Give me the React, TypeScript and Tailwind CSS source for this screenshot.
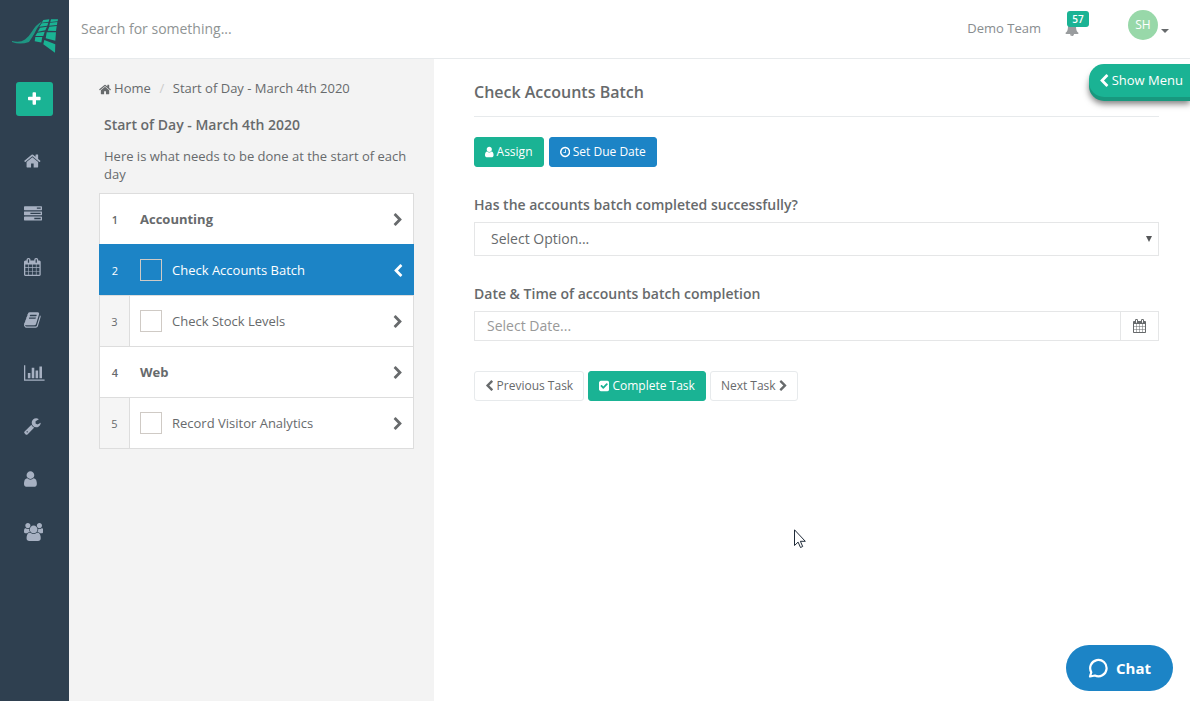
import { useState } from "react";
import clsx from "clsx";

type Glyph = { box: string; d: string };

const ICONS = {
  home: {
    box: "64 0 1664 1792",
    d: "M1472 992v480q0 26-19 45t-45 19h-384v-384h-256v384h-384q-26 0-45-19t-19-45v-480q0-1 .5-3t.5-3l575-474 575 474q1 2 1 6zm223-69l-62 74q-8 9-21 11h-3q-13 0-21-7l-692-577-692 577q-12 8-24 7-13-2-21-11l-62-74q-8-10-7-23.5t11-21.5l719-599q32-26 76-26t76 26l244 204v-195q0-14 9-23t23-9h192q14 0 23 9t9 23v408l219 182q10 8 11 21.5t-7 23.5z",
  },
  tasks: {
    box: "0 0 1792 1792",
    d: "M1024 1408h640v-128h-640v128zm-384-512h1024v-128h-1024v128zm640-512h384v-128h-384v128zm512 832v256q0 26-19 45t-45 19h-1664q-26 0-45-19t-19-45v-256q0-26 19-45t45-19h1664q26 0 45 19t19 45zm0-512v256q0 26-19 45t-45 19h-1664q-26 0-45-19t-19-45v-256q0-26 19-45t45-19h1664q26 0 45 19t19 45zm0-512v256q0 26-19 45t-45 19h-1664q-26 0-45-19t-19-45v-256q0-26 19-45t45-19h1664q26 0 45 19t19 45z",
  },
  calendar: {
    box: "64 0 1664 1792",
    d: "M192 1664h288v-288h-288v288zm352 0h320v-288h-320v288zm-352-352h288v-320h-288v320zm352 0h320v-320h-320v320zm-352-384h288v-288h-288v288zm736 736h320v-288h-320v288zm-384-736h320v-288h-320v288zm768 736h288v-288h-288v288zm-384-352h320v-320h-320v320zm-352-864v-288q0-13-9.500-22.500t-22.500-9.500h-64q-13 0-22.500 9.500t-9.500 22.500v288q0 13 9.500 22.500t22.500 9.500h64q13 0 22.500-9.500t9.500-22.500zm736 864h288v-320h-288v320zm-384-384h320v-288h-320v288zm384 0h288v-288h-288v288zm32-480v-288q0-13-9.500-22.500t-22.500-9.500h-64q-13 0-22.500 9.500t-9.500 22.500v288q0 13 9.500 22.500t22.500 9.500h64q13 0 22.500-9.500t9.500-22.500zm384-64v1280q0 52-38 90t-90 38h-1408q-52 0-90-38t-38-90v-1280q0-52 38-90t90-38h128v-96q0-66 47-113t113-47h64q66 0 113 47t47 113v96h384v-96q0-66 47-113t113-47h64q66 0 113 47t47 113v96h128q52 0 90 38t38 90z",
  },
  book: {
    box: "64 0 1664 1792",
    d: "M1703 478q40 57 18 129l-275 906q-19 64-76.500 107.500t-122.500 43.500h-923q-77 0-148.500-53.500t-99.500-131.500q-24-67-2-127 0-4 3-27t4-37q1-8-3-21.500t-3-19.500q2-11 8-21t16.500-23.500 16.500-23.500q23-38 45-91.500t30-91.500q3-10 .5-30t-.5-28q3-11 17-28t17-23q21-36 42-92t25-90q1-9-2.500-32t.5-28q4-13 22-30.500t22-22.500q19-26 42.500-84.500t27.500-96.500q1-8-3-25.500t-2-26.500q2-8 9-18t18-23 17-21q8-12 16.500-30.500t15-35 16-36 19.500-32 26.500-23.500 36-11.500 47.500 5.500l-1 3q38-9 51-9h761q74 0 114 56t18 130l-274 906q-36 119-71.500 153.500t-128.500 34.500h-869q-27 0-38 15-11 16-1 43 24 70 144 70h923q29 0 56-15.500t35-41.500l300-987q7-22 5-57 38 15 59 43zm-1064 2q-4 13 2 22.500t20 9.500h608q13 0 25.500-9.500t16.500-22.500l21-64q4-13-2-22.500t-20-9.500h-608q-13 0-25.500 9.500t-16.500 22.500zm-83 256q-4 13 2 22.500t20 9.500h608q13 0 25.500-9.500t16.500-22.500l21-64q4-13-2-22.500t-20-9.500h-608q-13 0-25.500 9.500t-16.500 22.500z",
  },
  chart: {
    box: "0 0 2048 1792",
    d: "M640 896v512h-256v-512h256zm384-512v1024h-256v-1024h256zm1024 1152v128h-2048v-1536h128v1408h1920zm-640-896v768h-256v-768h256zm384-384v1152h-256v-1152h256z",
  },
  wrench: {
    box: "64 0 1664 1792",
    d: "M448 1472q0-26-19-45t-45-19-45 19-19 45 19 45 45 19 45-19 19-45zm644-420l-682 682q-37 37-90 37-52 0-91-37l-106-108q-38-36-38-90 0-53 38-91l681-681q39 98 114.500 173.500t173.500 114.500zm634-435q0 39-23 106-47 134-164.500 217.500t-258.500 83.500q-185 0-316.500-131.500t-131.500-316.500 131.500-316.500 316.500-131.500q58 0 121.500 16.500t107.500 46.500q16 11 16 28t-16 28l-293 169v224l193 107q5-3 79-48.500t135.500-81 70.500-35.500q15 0 23.500 10t8.500 25z",
  },
  user: {
    box: "256 0 1280 1792",
    d: "M1536 1399q0 109-62.500 187t-150.500 78h-854q-88 0-150.500-78t-62.500-187q0-85 8.500-160.500t31.500-152 58.500-131 94-89 134.500-34.500q131 128 313 128t313-128q76 0 134.500 34.500t94 89 58.500 131 31.500 152 8.500 160.500zm-256-887q0 159-112.500 271.500t-271.500 112.500-271.500-112.500-112.500-271.500 112.500-271.500 271.500-112.500 271.500 112.500 112.500 271.500z",
  },
  users: {
    box: "-64 0 1920 1792",
    d: "M529 896q-162 5-265 128h-134q-82 0-138-40.500t-56-118.500q0-353 124-353 6 0 43.500 21t97.500 42.500 119 21.500q67 0 133-23-5 37-5 66 0 159 90 256zm1071 637q0 120-73 189.500t-194 69.500h-874q-121 0-194-69.500t-73-189.500q0-53 3.500-103.500t14-109 26.500-108.500 43-97.500 62-81 85.500-53.500 111.500-20q10 0 43 21.500t73 48 107 48 135 21.500 135-21.500 107-48 73-48 43-21.500q61 0 111.500 20t85.500 53.500 62 81 43 97.500 26.500 108.500 14 109 3.500 103.500zm-1024-1277q0 106-75 181t-181 75-181-75-75-181 75-181 181-75 181 75 75 181zm704 384q0 159-112.500 271.500t-271.500 112.500-271.500-112.500-112.500-271.500 112.500-271.500 271.500-112.500 271.500 112.500 112.500 271.500zm576 225q0 78-56 118.500t-138 40.500h-134q-103-123-265-128 90-97 90-256 0-29-5-66 66 23 133 23 59 0 119-21.500t97.500-42.500 43.500-21q124 0 124 353zm-128-609q0 106-75 181t-181 75-181-75-75-181 75-181 181-75 181 75 75 181z",
  },
  plus: {
    box: "192 0 1408 1792",
    d: "M1600 736v192q0 40-28 68t-68 28h-416v416q0 40-28 68t-68 28h-192q-40 0-68-28t-28-68v-416h-416q-40 0-68-28t-28-68v-192q0-40 28-68t68-28h416v-416q0-40 28-68t68-28h192q40 0 68 28t28 68v416h416q40 0 68 28t28 68z",
  },
  bell: {
    box: "0 0 1792 1792",
    d: "M912 1696q0-16-16-16-59 0-101.500-42.500t-42.500-101.500q0-16-16-16t-16 16q0 73 51.500 124.500t124.500 51.500q16 0 16-16zm816-288q0 52-38 90t-90 38h-448q0 106-75 181t-181 75-181-75-75-181h-448q-52 0-90-38t-38-90q50-42 91-88t85-119.500 74.500-158.500 50-206 19.500-260q0-152 117-282.500t307-158.500q-8-19-8-39 0-40 28-68t68-28 68 28 28 68q0 20-8 39 190 28 307 158.500t117 282.500q0 139 19.500 260t50 206 74.500 158.500 85 119.500 91 88z",
  },
  clock: {
    box: "128 0 1536 1792",
    d: "M1024 544v448q0 14-9 23t-23 9h-320q-14 0-23-9t-9-23v-64q0-14 9-23t23-9h224v-352q0-14 9-23t23-9h64q14 0 23 9t9 23zm416 352q0-148-73-273t-198-198-273-73-273 73-198 198-73 273 73 273 198 198 273 73 273-73 198-198 73-273zm224 0q0 209-103 385.500t-279.500 279.500-385.500 103-385.500-103-279.500-279.500-103-385.500 103-385.500 279.500-279.500 385.500-103 385.500 103 279.500 279.500 103 385.500z",
  },
  check: {
    box: "128 0 1536 1792",
    d: "M813 1299l614-614q19-19 19-45t-19-45l-102-102q-19-19-45-19t-45 19l-467 467-211-211q-19-19-45-19t-45 19l-102 102q-19 19-19 45t19 45l358 358q19 19 45 19t45-19zm851-883v960q0 119-84.500 203.500t-203.500 84.500h-960q-119 0-203.500-84.500t-84.500-203.500v-960q0-119 84.500-203.500t203.500-84.500h960q119 0 203.500 84.500t84.500 203.500z",
  },
  left: {
    box: "256 0 1280 1792",
    d: "M1427 301l-531 531 531 531q19 19 19 45t-19 45l-166 166q-19 19-45 19t-45-19l-742-742q-19-19-19-45t19-45l742-742q19-19 45-19t45 19l166 166q19 19 19 45t-19 45z",
  },
  right: {
    box: "256 0 1280 1792",
    d: "M1363 877l-742 742q-19 19-45 19t-45-19l-166-166q-19-19-19-45t19-45l531-531-531-531q-19-19-19-45t19-45l166-166q19-19 45-19t45 19l742 742q19 19 19 45t-19 45z",
  },
} satisfies Record<string, Glyph>;

type IconName = keyof typeof ICONS;

function Icon({ name, className }: { name: IconName; className: string }) {
  const { box, d } = ICONS[name];
  return (
    <svg viewBox={box} className={clsx("w-auto shrink-0", className)} fill="currentColor" aria-hidden="true">
      <path d={d} />
    </svg>
  );
}

function Logo() {
  return (
    <svg viewBox="0 0 48 36" className="h-9 w-12" fill="#1ab394" aria-hidden="true">
      {/* tail */}
      <path d="M0 23q8 2 13-1.500q4-3 7-8q4-7 10-10l-5 7q-3 6-5 9t-3 4.500q-9 3-17 0z" opacity=".75" />
      {/* inner column */}
      <path d="M31.300 2l6-.7-.6 2.400-7 1zM29.700 5.300l6.600-.6-1 3-8 1zM28 9.700l7-1-1.700 3.600-7.600 1.400zM25.300 14.700l7.400-1-1.400 4.300h-8zM23.300 19h7l-1 5.500-6.600-1.200z" />
      {/* outer column */}
      <path d="M39 1.300h7l-.3 2-7.400.7zM38 4.700l7.300-.7-.3 3-7.700.7zM37.300 8.700l7.400-.7-.7 5-8.300-.3zM34.700 14.300h9.300l-.7 8.400-9.600-2.400zM32.300 22l11 4.300-.3 8.400-11.700-8.400z" />
    </svg>
  );
}

const NAV: { icon: IconName; label: string }[] = [
  { icon: "home", label: "Home" },
  { icon: "tasks", label: "Tasks" },
  { icon: "calendar", label: "Calendar" },
  { icon: "book", label: "Library" },
  { icon: "chart", label: "Reports" },
  { icon: "wrench", label: "Settings" },
  { icon: "user", label: "Profile" },
  { icon: "users", label: "Teams" },
];

type Item = { id: number; title: string; heading?: boolean };

const ITEMS: Item[] = [
  { id: 1, title: "Accounting", heading: true },
  { id: 2, title: "Check Accounts Batch" },
  { id: 3, title: "Check Stock Levels" },
  { id: 4, title: "Web", heading: true },
  { id: 5, title: "Record Visitor Analytics" },
];

function Sidebar() {
  return (
    <aside className="flex w-[69px] shrink-0 flex-col bg-[#2f4050] text-[#a7b1c2]">
      <a href="#" aria-label="Dashboard" className="mt-[18px] ml-3">
        <Logo />
      </a>
      <button aria-label="Add" className="mt-7 ml-4 flex h-[34px] w-[37px] items-center justify-center rounded-[3px] bg-[#1ab394] text-white">
        <Icon name="plus" className="h-4" />
      </button>
      <nav className="mt-[18px] flex flex-col">
        {NAV.map((n) => (
          <a key={n.icon} href="#" aria-label={n.label} className="flex h-[53px] items-center pl-6">
            <Icon name={n.icon} className="h-[18px]" />
          </a>
        ))}
      </nav>
    </aside>
  );
}

function Header() {
  return (
    <header className="flex h-[59px] shrink-0 items-center border-b border-[#e7eaec] bg-white pr-[21px] pl-3">
      <input
        type="text"
        aria-label="Search"
        placeholder="Search for something..."
        className="min-w-0 flex-1 text-sm outline-none placeholder:text-[#8f9494]"
      />
      <span className="text-[13px] text-[#888d8f]">Demo Team</span>
      <button aria-label="Notifications" className="relative ml-6 text-[#999c9e]">
        <Icon name="bell" className="h-[14px]" />
        <span className="absolute bottom-[9px] left-[2px] flex h-4 w-[22px] items-center justify-center rounded-[3px] bg-[#1ab394] text-[10px] font-semibold text-white">
          57
        </span>
      </button>
      <button aria-label="Account" className="ml-[49px] flex items-center gap-[3px] pb-2">
        <span className="flex size-[30px] items-center justify-center rounded-full bg-[#98d8a9] text-xs text-white">SH</span>
        <span className="mt-3 border-x-4 border-t-4 border-x-transparent border-t-[#676a6c]" />
      </button>
    </header>
  );
}

function TaskRow({ item, active, onSelect }: { item: Item; active: boolean; onSelect: () => void }) {
  const id = "task-" + item.id;
  return (
    <li
      className={clsx(
        "flex h-[51px] border-x border-t",
        active ? "border-[#1c84c6] bg-[#1c84c6] font-medium text-white" : "border-[#dddddd] bg-white"
      )}
    >
      <span
        className={clsx(
          "flex w-[30px] shrink-0 items-center justify-center pt-[2px] text-[11px]",
          item.heading && "font-semibold",
          !item.heading && !active && "border-r border-[#dddddd] bg-[#f5f5f5]"
        )}
      >
        {item.id}
      </span>
      <div className="flex flex-1 items-center pl-[10px]">
        {item.heading ? (
          <span className="pt-[2px] font-bold">{item.title}</span>
        ) : (
          <>
            <input id={id} type="checkbox" className="size-[22px] appearance-none border border-[#cfcac5] checked:bg-[#1ab394]" />
            <label htmlFor={id} className="pt-[2px] pl-[10px]">{item.title}</label>
          </>
        )}
        <button aria-label={"Open " + item.title} onClick={onSelect} className="mr-[10px] ml-auto pt-[2px]">
          <Icon name={active ? "left" : "right"} className="h-[14px]" />
        </button>
      </div>
    </li>
  );
}

function TaskPanel({ active, onSelect }: { active: number; onSelect: (id: number) => void }) {
  return (
    <section className="w-[365px] shrink-0 bg-[#f3f3f3] pt-5 pr-5 pl-[30px]">
      <nav aria-label="Breadcrumb" className="flex h-5 items-center">
        <a href="#" className="flex items-center gap-[3px]">
          <Icon name="home" className="h-[13px]" />
          Home
        </a>
        <span className="w-[22px] text-center text-[#cccccc]">/</span>
        <span>Start of Day - March 4th 2020</span>
      </nav>
      <h2 className="mt-4 pl-[5px] text-sm leading-5 font-semibold">Start of Day - March 4th 2020</h2>
      <p className="mt-3 mb-[10px] pl-[5px] leading-[18px]">Here is what needs to be done at the start of each day</p>
      <ul className="border-b border-[#dddddd]">
        {ITEMS.map((item) => (
          <TaskRow key={item.id} item={item} active={item.id === active} onSelect={() => onSelect(item.id)} />
        ))}
      </ul>
    </section>
  );
}

const btn = "flex h-[30px] items-center gap-[3px] rounded-[3px] border px-[10px] text-xs";

function TaskForm() {
  return (
    <main className="min-w-0 flex-1 bg-white pt-5 pr-[31px] pl-10">
      <h1 className="border-b border-[#e7eaec] pt-[2px] pb-[13px] text-base leading-[22px] font-semibold">
        Check Accounts Batch
      </h1>
      <div className="mt-5 flex gap-[5px] text-white">
        <button className={clsx(btn, "border-[#1ab394] bg-[#1ab394]")}>
          <Icon name="user" className="h-3" />
          Assign
        </button>
        <button className={clsx(btn, "border-[#1c84c6] bg-[#1c84c6]")}>
          <Icon name="clock" className="h-3" />
          Set Due Date
        </button>
      </div>

      <label htmlFor="result" className="mt-7 block text-sm leading-5 font-semibold">
        Has the accounts batch completed successfully?
      </label>
      <div className="relative mt-[7px]">
        <select id="result" className="h-[34px] w-full appearance-none border border-[#e5e6e7] bg-white pl-4 text-sm outline-none">
          <option>Select Option...</option>
          <option>Yes</option>
          <option>No</option>
        </select>
        <span className="pointer-events-none absolute top-[14px] right-[7px] border-x-[3px] border-t-[6px] border-x-transparent border-t-[#555759]" />
      </div>

      <label htmlFor="completed" className="mt-7 block text-sm leading-5 font-semibold">
        Date &amp; Time of accounts batch completion
      </label>
      <div className="mt-[7px] flex h-[30px] border border-[#e5e6e7]">
        <input
          id="completed"
          type="text"
          placeholder="Select Date..."
          className="min-w-0 flex-1 pl-3 text-sm outline-none placeholder:text-[#999999]"
        />
        <button aria-label="Pick date" className="flex w-[38px] items-center justify-center border-l border-[#e5e6e7]">
          <Icon name="calendar" className="h-[14px]" />
        </button>
      </div>

      <div className="mt-[30px] flex gap-1">
        <button className={clsx(btn, "border-[#e7eaec] bg-white")}>
          <Icon name="left" className="h-3" />
          Previous Task
        </button>
        <button className={clsx(btn, "border-[#1ab394] bg-[#1ab394] text-white")}>
          <Icon name="check" className="h-3" />
          Complete Task
        </button>
        <button className={clsx(btn, "border-[#e7eaec] bg-white")}>
          Next Task
          <Icon name="right" className="h-3" />
        </button>
      </div>
    </main>
  );
}

export default function App() {
  const [active, setActive] = useState(2);

  return (
    <div className="relative flex min-h-screen font-['Open_Sans',sans-serif] text-[13px] text-[#676a6c]">
      <Sidebar />
      <div className="flex min-w-0 flex-1 flex-col">
        <Header />
        <div className="flex flex-1">
          <TaskPanel active={active} onSelect={setActive} />
          <TaskForm />
        </div>
      </div>

      <button className="absolute top-16 right-0 flex h-[33px] items-center gap-[3px] rounded-l-[15px] bg-[#1ab394] pr-[7px] pl-[10px] text-white shadow-[0_4px_0_#18987e,0_7px_6px_rgba(0,0,0,0.5)]">
        <Icon name="left" className="h-[14px]" />
        Show Menu
      </button>

      <button className="fixed right-[17px] bottom-[10px] flex h-[46px] w-[107px] items-center justify-center gap-2 rounded-full bg-[#1c84c6] text-[15px] font-bold text-white">
        <svg viewBox="0 0 20 20" className="size-5" fill="none" stroke="currentColor" strokeWidth="2.200" strokeLinejoin="round" aria-hidden="true">
          <path d="M2 18.500l1.300-4.300a8.200 8.200 0 1 1 3.600 3.300z" />
        </svg>
        Chat
      </button>

      {/* mouse pointer */}
      <svg viewBox="0 0 12 19" className="pointer-events-none absolute top-[529px] left-[794px] h-[19px] w-3" fill="#fff" stroke="#1f2a38" aria-hidden="true">
        <path d="M.5.8v15.700l3.600-3.400 2.400 5.400 2.200-1-2.300-5.200h4.900z" />
      </svg>
    </div>
  );
}
